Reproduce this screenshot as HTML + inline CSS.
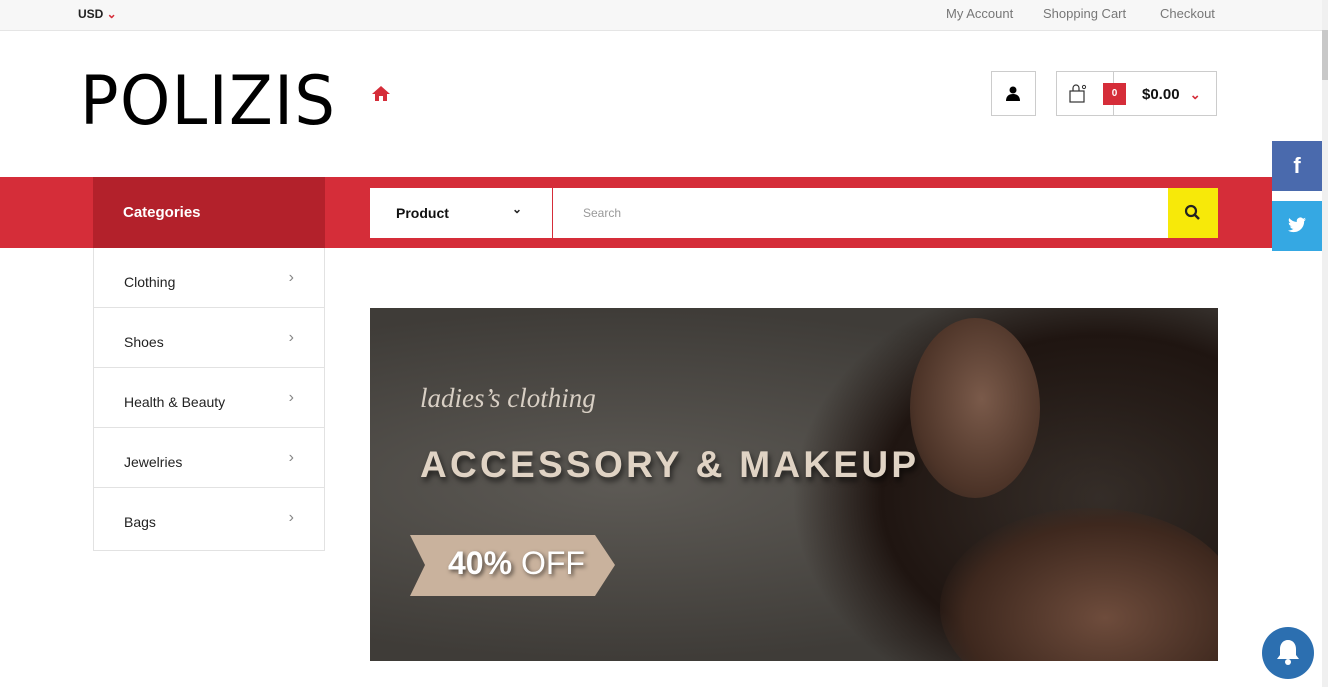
<!DOCTYPE html>
<html><head><meta charset="utf-8"><style>
*{box-sizing:border-box;margin:0;padding:0}
body{width:1328px;height:687px;overflow:hidden;background:#fff;font-family:"Liberation Sans",sans-serif;position:relative;color:#222}
.top{height:31px;background:#f7f7f7;border-bottom:1px solid #e5e5e5;position:relative;font-size:13px;color:#777}
.abs{position:absolute}
.red{background:#d52d39}
.cat li{list-style:none;height:60px;border-bottom:1px solid #e2e2e2;padding-left:30px;line-height:66px;padding-top:0;font-size:14px;color:#222;position:relative}
.cat li span{position:relative;top:0}
.cat li:after{content:"›";position:absolute;right:30px;top:-4px;color:#888;font-size:16px}
</style></head><body>
<div class="top">
<span class="abs" style="left:78px;top:7px;font-weight:bold;color:#222;font-size:12px">USD <span style="color:#d52d39">⌄</span></span>
<span class="abs" style="left:946px;top:6px">My Account</span>
<span class="abs" style="left:1043px;top:6px">Shopping Cart</span>
<span class="abs" style="left:1160px;top:6px">Checkout</span>
</div>
<div class="abs" style="left:1322px;top:0;width:6px;height:687px;background:#f0f0f0"></div>
<div class="abs" style="left:1322px;top:30px;width:6px;height:50px;background:#c8c8c8"></div>
<div class="abs" style="left:80px;top:62px;font-size:68px;color:#000;letter-spacing:1.5px;font-family:'DejaVu Sans',sans-serif;transform:scaleX(0.94);transform-origin:left">POLIZIS</div>
<svg class="abs" style="left:372px;top:85px" width="18" height="16" viewBox="0 0 18 16"><path d="M9 1L0 9h3v7h4v-5h4v5h4V9h3z" fill="#d52d39"/></svg>
<div class="abs" style="left:991px;top:71px;width:45px;height:45px;border:1px solid #ccc"></div>
<svg class="abs" style="left:1006px;top:86px" width="14" height="15" viewBox="0 0 14 15"><circle cx="7" cy="4" r="3.5" fill="#000"/><path d="M0 15c0-5 3-7 7-7s7 2 7 7z" fill="#000"/></svg>
<div class="abs" style="left:1056px;top:71px;width:161px;height:45px;border:1px solid #ccc"></div>
<div class="abs" style="left:1113px;top:71px;width:1px;height:45px;background:#ccc"></div>
<svg class="abs" style="left:1069px;top:84px" width="20" height="19" viewBox="0 0 20 19"><rect x="1" y="7" width="14" height="11" fill="none" stroke="#333" stroke-width="1.2"/><path d="M4 7V4a3 3 0 0 1 6 0v3" fill="none" stroke="#333" stroke-width="1.2"/><circle cx="15" cy="3" r="1.6" fill="none" stroke="#333"/></svg>
<div class="abs red" style="left:1103px;top:83px;width:23px;height:22px;color:#fff;font-size:10px;font-weight:bold;text-align:center;line-height:22px">0</div>
<div class="abs" style="left:1142px;top:86px;font-size:15px;font-weight:bold;color:#111">$0.00 <span style="color:#d52d39;margin-left:6px;font-size:13px">⌄</span></div>
<div class="abs red" style="left:0;top:177px;width:1272px;height:71px"></div>
<div class="abs" style="left:93px;top:177px;width:232px;height:71px;background:#b3212b;color:#fff;font-weight:bold;font-size:15px;padding:27px 0 0 30px">Categories</div>
<div class="abs" style="left:370px;top:188px;width:848px;height:50px;background:#fff"></div>
<div class="abs" style="left:552px;top:188px;width:1px;height:50px;background:#d52d39"></div>
<div class="abs" style="left:396px;top:205px;font-size:14px;font-weight:bold;color:#111">Product</div>
<div class="abs" style="left:512px;top:202px;font-size:12px;font-weight:bold">⌄</div>
<div class="abs" style="left:583px;top:206px;font-size:12px;color:#999">Search</div>
<div class="abs" style="left:1168px;top:188px;width:50px;height:50px;background:#f7e909"></div>
<svg class="abs" style="left:1184px;top:204px" width="17" height="17" viewBox="0 0 17 17"><circle cx="7" cy="7" r="5" fill="none" stroke="#222" stroke-width="2.2"/><path d="M11 11l4 4" stroke="#222" stroke-width="2.5"/></svg>
<div class="abs" style="left:1272px;top:141px;width:50px;height:50px;background:#4a6aad;color:#fff;font-size:22px;font-weight:bold;text-align:center;line-height:50px">f</div>
<div class="abs" style="left:1272px;top:201px;width:50px;height:50px;background:#35a8e3"></div>
<svg class="abs" style="left:1288px;top:217px" width="18" height="16" viewBox="0 0 24 20"><path d="M24 2.4a10 10 0 0 1-2.8.8A5 5 0 0 0 23.3.4a10 10 0 0 1-3.1 1.2A4.9 4.9 0 0 0 11.8 6 14 14 0 0 1 1.7.9a4.9 4.9 0 0 0 1.5 6.6A5 5 0 0 1 1 6.9a4.9 4.9 0 0 0 3.9 4.8 5 5 0 0 1-2.2.1 4.9 4.9 0 0 0 4.6 3.4A9.9 9.9 0 0 1 0 17.3 14 14 0 0 0 7.5 19.5c9 0 14-7.5 14-14v-.6A10 10 0 0 0 24 2.4z" fill="#fff"/></svg>
<ul class="abs cat" style="left:93px;top:248px;width:232px;border:1px solid #e2e2e2;border-top:none">
<li style="line-height:68px">Clothing</li><li style="line-height:68px">Shoes</li><li style="line-height:68px">Health &amp; Beauty</li><li style="line-height:68px">Jewelries</li><li style="border-bottom:none;height:62px;line-height:68px">Bags</li></ul>
<div class="abs" style="left:370px;top:308px;width:848px;height:353px;background:radial-gradient(ellipse at 30% 50%,#5d5a55,#3f3c38 70%);overflow:hidden">
<div class="abs" style="left:420px;top:-40px;width:520px;height:460px;background:radial-gradient(ellipse at 60% 50%,#25191380 0%,#1f1511 50%,rgba(30,20,16,0) 70%)"></div>
<div class="abs" style="left:540px;top:10px;width:130px;height:180px;border-radius:50%;background:radial-gradient(ellipse at 55% 45%,#7a5a4a,#4d3428 65%,rgba(40,28,22,0))"></div>
<div class="abs" style="left:570px;top:200px;width:300px;height:200px;border-radius:50%;background:radial-gradient(ellipse at 55% 55%,#6e4c3c,#3e281e 60%,rgba(40,28,22,0) 75%)"></div>
<div class="abs" style="left:50px;top:75px;font-family:'Liberation Serif',serif;font-style:italic;font-size:27px;color:#d8cfc4">ladies’s clothing</div>
<div class="abs" style="left:50px;top:136px;font-weight:bold;font-size:37px;letter-spacing:3.3px;color:#e0d3c4;text-shadow:2px 4px 6px rgba(0,0,0,.6)">ACCESSORY &amp; MAKEUP</div>
<svg class="abs" style="left:40px;top:227px" width="205" height="61"><polygon points="0,0 185,0 205,30 185,61 0,61 15,30" fill="#c9b29d"/></svg>
<div class="abs" style="left:78px;top:237px;font-size:32px;color:#fff;text-shadow:2px 2px 4px rgba(0,0,0,.6)"><b>40%</b> OFF</div>
</div>
<div class="abs" style="left:1262px;top:627px;width:52px;height:52px;border-radius:50%;background:#2c6fb0"></div>
<svg class="abs" style="left:1276px;top:638px" width="24" height="28" viewBox="0 0 24 28"><path d="M12 2c-5 0-8 4-8 9v6l-3 4h22l-3-4v-6c0-5-3-9-8-9z" fill="#fff"/><circle cx="12" cy="24" r="3" fill="#fff"/></svg>
</body></html>
